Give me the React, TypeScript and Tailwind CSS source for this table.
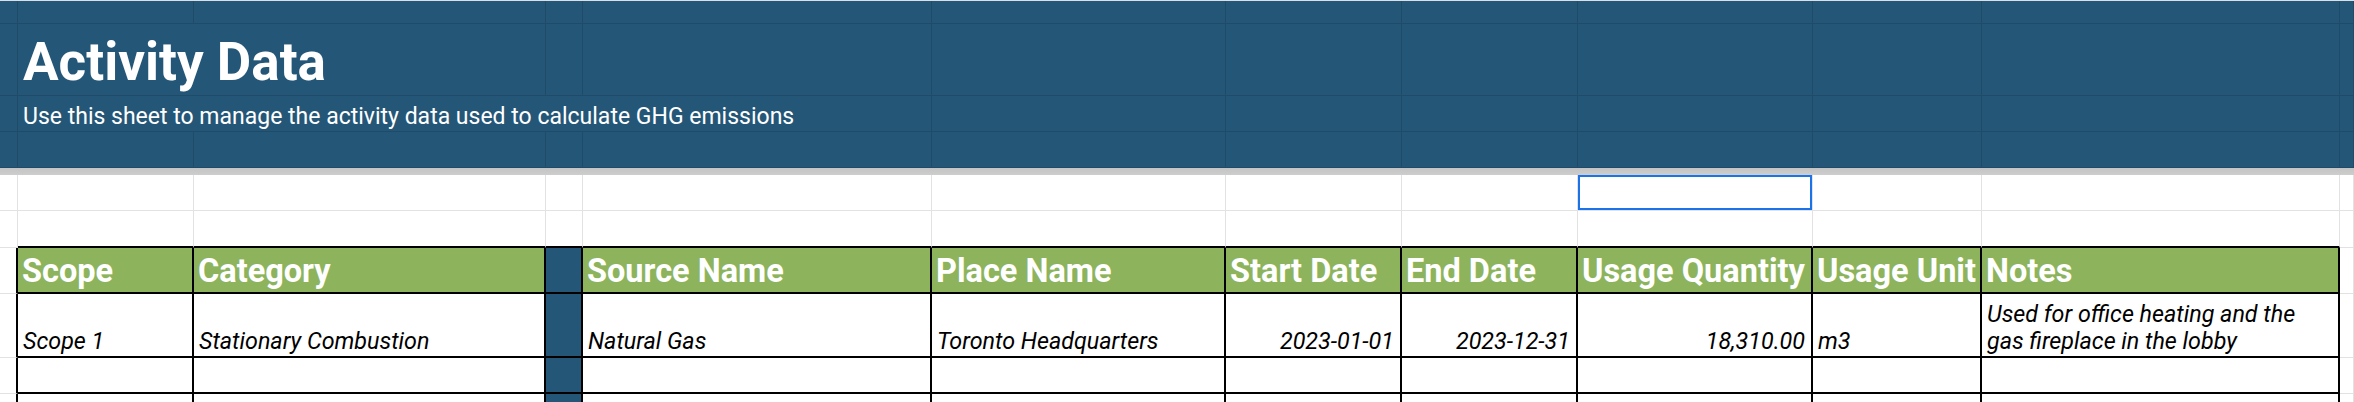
import React from "react";

// column widths, A..K, then L fills the rest
const W = [
  "w-[18px]",
  "w-[176px]",
  "w-[352px]",
  "w-[37px]",
  "w-[349px]",
  "w-[294px]",
  "w-[176px]",
  "w-[176px]",
  "w-[235px]",
  "w-[169px]",
  "w-[358px]",
];

const blueCell = "shrink-0 h-full bg-[#245678] border-r border-b border-[#1f4a68]";
const grayCell = "shrink-0 h-full bg-white border-r border-b border-[#e2e2e2]";
const tableCell = "shrink-0 h-full border-r-2 border-b-2 border-black";
const leftEdge = "shrink-0 h-full bg-white border-r-2 border-r-black border-b border-b-[#e2e2e2]";

const headers = [
  "Scope",
  "Category",
  "",
  "Source Name",
  "Place Name",
  "Start Date",
  "End Date",
  "Usage Quantity",
  "Usage Unit",
  "Notes",
];

function BlueRow({ h }: { h: string }) {
  return (
    <div className={`flex ${h}`}>
      {W.map((w, i) => (
        <div key={i} className={`${blueCell} ${w}`} />
      ))}
      <div className={`${blueCell} flex-1`} />
    </div>
  );
}

function GridRow({ h, tableTop, selected }: { h: string; tableTop?: boolean; selected?: number }) {
  return (
    <div className={`flex ${h}`}>
      {W.map((w, i) => (
        <div
          key={i}
          className={`${grayCell} ${w} ${tableTop && i > 0 ? "border-b-2 border-b-black" : ""} ${
            selected === i ? "shadow-[inset_0_0_0_2px_#1a73e8]" : ""
          }`}
        />
      ))}
      <div className={`${grayCell} flex-1`} />
    </div>
  );
}

function TableRow({ h, cells }: { h: string; cells?: { text: string; right?: boolean }[] }) {
  return (
    <div className={`flex ${h}`}>
      <div className={`${leftEdge} ${W[0]}`} />
      {W.slice(1).map((w, i) => {
        const c = cells?.[i];
        const isBlue = i === 2;
        return (
          <div
            key={i}
            className={`${tableCell} ${w} ${isBlue ? "bg-[#245678]" : "bg-white"} flex items-end ${
              c?.right ? "justify-end pr-[6px]" : "pl-[5px]"
            } pb-[1px] overflow-hidden`}
          >
            {c && (
              <span className="text-[23.3px] leading-[27px] italic text-black whitespace-pre-line">{c.text}</span>
            )}
          </div>
        );
      })}
      <div className={`${grayCell} flex-1`} />
    </div>
  );
}

export default function App() {
  return (
    <div className="w-[2354px] h-[402px] overflow-hidden bg-white font-[Roboto,sans-serif]">
      <div className="h-px bg-[#d9dfe5]" />
      <BlueRow h="h-[23px]" />

      {/* title row: text runs over B and C */}
      <div className="flex h-[72px]">
        <div className={`${blueCell} ${W[0]}`} />
        <div className={`${blueCell} w-[528px] flex items-end pl-[5px] pb-[6px]`}>
          <span className="text-[53px] leading-none font-bold text-white whitespace-nowrap">Activity Data</span>
        </div>
        {W.slice(3).map((w, i) => (
          <div key={i} className={`${blueCell} ${w}`} />
        ))}
        <div className={`${blueCell} flex-1`} />
      </div>

      {/* subtitle row: text runs over B..E */}
      <div className="flex h-[36px]">
        <div className={`${blueCell} ${W[0]}`} />
        <div className={`${blueCell} w-[914px] flex items-end pl-[5px] pb-[3px]`}>
          <span className="text-[23px] leading-none text-white whitespace-nowrap">
            Use this sheet to manage the activity data used to calculate GHG emissions
          </span>
        </div>
        {W.slice(5).map((w, i) => (
          <div key={i} className={`${blueCell} ${w}`} />
        ))}
        <div className={`${blueCell} flex-1`} />
      </div>

      <BlueRow h="h-[36px]" />

      {/* frozen rows divider */}
      <div className="h-[7px] bg-gradient-to-b from-[#c4c4c4] to-[#cdcdcd]" />

      <GridRow h="h-[36px]" selected={8} />
      <GridRow h="h-[37px]" tableTop />

      {/* header row */}
      <div className="flex h-[46px]">
        <div className={`${leftEdge} ${W[0]}`} />
        {W.slice(1).map((w, i) => (
          <div
            key={i}
            className={`${tableCell} ${w} ${i === 2 ? "bg-[#245678]" : "bg-[#8db45c]"} flex items-end pl-[4px] pb-[5px] overflow-hidden`}
          >
            <span className="text-[32.5px] leading-none font-bold text-white whitespace-nowrap">{headers[i]}</span>
          </div>
        ))}
        <div className={`${grayCell} flex-1`} />
      </div>

      <TableRow
        h="h-[64px]"
        cells={[
          { text: "Scope 1" },
          { text: "Stationary Combustion" },
          { text: "" },
          { text: "Natural Gas" },
          { text: "Toronto Headquarters" },
          { text: "2023-01-01", right: true },
          { text: "2023-12-31", right: true },
          { text: "18,310.00", right: true },
          { text: "m3" },
          { text: "Used for office heating and the\ngas fireplace in the lobby" },
        ]}
      />
      <TableRow h="h-[36px]" />
      <TableRow h="h-[36px]" />
    </div>
  );
}
